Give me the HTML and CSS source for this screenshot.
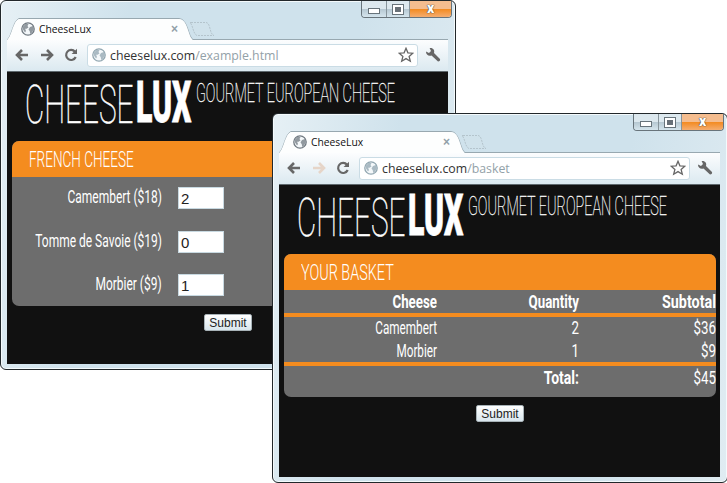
FILE: index.html
```html
<!DOCTYPE html>
<html lang="en">
<head>
<meta charset="utf-8">
<title>CheeseLux</title>
<link rel="stylesheet" href="styles.css">
</head>
<body>
<svg class="defs" width="0" height="0">
  <symbol id="globe" viewBox="0 0 14 14"><circle cx="7" cy="7" r="6.2" fill="#f4f8fa" stroke="currentColor" stroke-width="1.3"/><path d="M2 4.5 4.5 2 7.5 2 6.5 4 7.5 5.5 5 7 4 6.5 5 9 4 10.5 2 7.5zM9 5l3-1 .7 3-1.5 3.5-2 1.5-.5-3-1.2-1.5z" fill="currentColor" opacity=".75"/></symbol>
  <symbol id="back" viewBox="0 0 14 12"><path d="M7 1 2 6l5 5M2 6h11" fill="none" stroke="currentColor" stroke-width="2.6"/></symbol>
  <symbol id="forward" viewBox="0 0 14 12"><path d="M7 1l5 5-5 5M12 6H1" fill="none" stroke="currentColor" stroke-width="2.6"/></symbol>
  <symbol id="reload" viewBox="0 0 14 14"><path d="M11 3.8A5 5 0 1 0 11.7 9" fill="none" stroke="currentColor" stroke-width="2.2"/><path d="M13 .8V6H7.6z" fill="currentColor"/></symbol>
  <symbol id="star" viewBox="0 0 16 16"><path d="m8 1.3 1.9 4.5 4.9.4-3.7 3.2 1.2 4.8L8 11.6l-4.3 2.6 1.2-4.8L1.2 6.2l4.900-.4z" fill="#fff" stroke="#666" stroke-width="1.3"/></symbol>
  <symbol id="wrench" viewBox="0 0 16 16"><path d="M1 4.5 4 6l2-2L4.600 1C8 .4 10 3 9 6l6 6q.6 2-2 2.500L6.500 8.500C3.500 9.500.8 7.500 1 4.500z" fill="#666"/></symbol>
  <symbol id="tab" viewBox="0 0 220 22"><path d="M0 22C5 18 6 3 12 .5H172C181 1 181 19 186 21.500H220" fill="none" stroke="#98a8b0"/><path d="M0 22C5 18 6 3 12 1H172C181 1 181 19 186 22z" fill="#fdfefe"/><path d="M184 4.500H199C204 5 202 16 207 17.500H190C186 16 186 7 183 4.500z" fill="#d0e2eb" stroke="#b4c4cc" stroke-dasharray="2 1"/></symbol>
</svg>
<main class="desktop">
  <section class="window window-form">
    <div class="controls"><i class="min"></i><i class="max"></i><i class="close">x</i></div>
    <header class="tabs">
      <svg class="tab-shape"><use href="#tab"/></svg>
      <div class="tab"><svg class="globe"><use href="#globe"/></svg><span>CheeseLux</span><b>×</b></div>
    </header>
    <nav class="toolbar">
      <svg class="arrow"><use href="#back"/></svg><svg class="arrow"><use href="#forward"/></svg><svg class="reload"><use href="#reload"/></svg>
      <div class="address"><svg class="globe"><use href="#globe"/></svg><span class="url">cheeselux.com<em>/example.html</em></span><svg class="star"><use href="#star"/></svg></div>
      <svg class="wrench"><use href="#wrench"/></svg>
    </nav>
    <div class="page">
      <div class="brand"><span class="word"><span>CHEESE</span></span><strong class="lux"><span>LUX</span></strong><span class="tagline"><span>GOURMET EUROPEAN CHEESE</span></span></div>
      <div class="panel">
        <h2><span class="french">FRENCH CHEESE</span></h2>
        <div class="fields">
          <label><span>Camembert ($18)</span></label><div class="input">2</div>
          <label><span>Tomme de Savoie ($19)</span></label><div class="input">0</div>
          <label><span>Morbier ($9)</span></label><div class="input">1</div>
        </div>
      </div>
      <button>Submit</button>
    </div>
  </section>

  <section class="window window-basket">
    <div class="controls"><i class="min"></i><i class="max"></i><i class="close">x</i></div>
    <header class="tabs">
      <svg class="tab-shape"><use href="#tab"/></svg>
      <div class="tab"><svg class="globe"><use href="#globe"/></svg><span>CheeseLux</span><b>×</b></div>
    </header>
    <nav class="toolbar">
      <svg class="arrow"><use href="#back"/></svg><svg class="arrow disabled"><use href="#forward"/></svg><svg class="reload"><use href="#reload"/></svg>
      <div class="address"><svg class="globe"><use href="#globe"/></svg><span class="url">cheeselux.com<em>/basket</em></span><svg class="star"><use href="#star"/></svg></div>
      <svg class="wrench"><use href="#wrench"/></svg>
    </nav>
    <div class="page">
      <div class="brand"><span class="word"><span>CHEESE</span></span><strong class="lux"><span>LUX</span></strong><span class="tagline"><span>GOURMET EUROPEAN CHEESE</span></span></div>
      <div class="panel">
        <h2><span class="basket">YOUR BASKET</span></h2>
        <div class="row head"><span>Cheese</span><span>Quantity</span><span>Subtotal</span></div>
        <div class="items">
          <div class="row"><span>Camembert</span><span>2</span><span>$36</span></div>
          <div class="row"><span>Morbier</span><span>1</span><span>$9</span></div>
        </div>
        <div class="row total"><span></span><span class="bold">Total:</span><span>$45</span></div>
      </div>
      <button>Submit</button>
    </div>
  </section>
</main>
</body>
</html>
```
FILE: styles.css
```css
* { box-sizing: border-box; }
body { margin: 0; background: #fff; overflow: hidden; }
.defs { position: absolute; }
.desktop { position: relative; width: 727px; height: 483px; overflow: hidden; }
.window {
  position: absolute; width: 456px; height: 370px; padding: 0 7px 6px 6px;
  background: linear-gradient(100deg, #e6f0f5 0, #cfe2ec 25%, #cfe2ec 70%, #e0ecf2);
  border: 1px solid #22282b; border-radius: 6px;
  box-shadow: inset 0 0 0 1px #f4fafc;
  font-family: "Open Sans", sans-serif;
}
.window-form { left: 0; top: 0; }
.window-basket { left: 272px; top: 113px; }

.controls {
  position: absolute; top: 0; right: 3px; width: 91px; height: 17px; display: flex;
  border: 1px solid #68747b; border-top: 0; border-radius: 0 0 4px 4px;
}
.controls i { display: flex; align-items: center; justify-content: center; background: linear-gradient(#dce8ee 50%, #b5c7d1 50%, #d5e5ed); font-style: normal; }
.controls .min { width: 25px; border-right: 1px solid #87949b; border-radius: 0 0 0 3px; }
.min::after { content: ""; width: 10px; height: 4px; margin-top: 4px; background: #fff; border: 1px solid #68747b; }
.max { width: 23px; border-right: 1px solid #87949b; }
.max::after { content: ""; width: 10px; height: 9px; background: #687077; border: 1px solid #68747b; box-shadow: inset 0 0 0 2px #fff; }
.controls .close { flex: 1; border-radius: 0 0 3px 0; background: linear-gradient(#f5bd8f 50%, #f38a1f 50%, #f5ad70); color: #fff; font: 900 14px/14px Roboto, sans-serif; text-shadow: 0 0 1px #333, 0 0 1px #333; padding-bottom: 2px; }

.tabs { position: relative; z-index: 1; display: grid; height: 38px; padding-top: 17px; }
.tab-shape { grid-area: 1 / 1; width: 220px; height: 22px; }
.tab { grid-area: 1 / 1; display: flex; align-items: center; width: 172px; height: 22px; padding-left: 14px; z-index: 1; font-size: 10.3px; color: #111; }
.globe { width: 14px; height: 14px; color: #707980; flex: none; }
.tab span { margin-left: 4px; flex: 1; }
.tab b { color: #91a0a8; font: 700 12px/12px "Liberation Sans", sans-serif; margin-right: 1px; }
.toolbar {
  display: flex; align-items: center; height: 32px; padding: 0 7px 1px 8px;
  border-top: 1px solid #98a8b0; background: linear-gradient(#fcfdfe, #dbe9f0);
  color: #676767;
}
.arrow { width: 14px; height: 12px; margin-right: 11px; }
.arrow.disabled { color: #e6d5c8; }
.reload { width: 14px; height: 14px; margin-left: -1px; }
.address { display: flex; align-items: center; width: 331px; height: 23px; margin-left: 9px; padding: 0 3px 0 4px; background: #fff; border: 1px solid #cadce5; border-radius: 3px; }
.address .globe { color: #91a6b0; }
.url { flex: 1; margin-left: 4px; font-size: 13.4px; line-height: 20px; color: #333; white-space: nowrap; transform: scaleX(.92); transform-origin: 0 50%; }
.url em { font-style: normal; color: #93a1a8; }
.star { width: 16px; height: 16px; }
.wrench { width: 16px; height: 16px; margin-left: 7px; }

.page { height: 293px; padding: 9px 0 0 5px; background: #111; border-top: 1px solid #5e686d; overflow: hidden; color: #fff; font-family: Roboto, sans-serif; }
.brand { display: flex; height: 60px; white-space: nowrap; }
.brand > span > span, .lux > span, h2 span { display: inline-block; transform-origin: 0 50%; }
.word { width: 111px; margin-left: 13px; font-weight: 100; font-size: 54px; line-height: 47px; }
.word span { transform: scaleX(.55); -webkit-text-stroke: .6px #fff; }
.lux { width: 60px; font-weight: 900; font-size: 57px; line-height: 43px; }
.lux span { transform: scaleX(.53); -webkit-text-stroke: .8px #fff; }
.tagline { width: 200px; font-weight: 100; font-size: 25px; line-height: 25px; }
.tagline span { transform: scaleX(.575); -webkit-text-stroke: .3px #fff; }
.panel { width: 432px; background: #6d6d6d; border-radius: 7px; overflow: hidden; }
h2 { margin: 0; height: 36px; padding-left: 17px; background: #f48c1f; font-weight: 300; font-size: 22px; line-height: 38px; white-space: nowrap; }
.french { transform: scaleX(.615); }
.basket { transform: scaleX(.655); }
.fields { display: grid; grid-template-columns: 150px 46px; column-gap: 16px; row-gap: 21.5px; height: 129px; padding-top: 10px; grid-auto-rows: 22px; }
.fields label { display: flex; justify-content: flex-end; font-size: 17.5px; line-height: 21px; white-space: nowrap; }
.fields label span { flex: none; transform: scaleX(.685); transform-origin: 100% 50%; }
.input { background: #fff; border: 1px solid #c8d9e1; padding-left: 2px; color: #222; font: 15px/21px "Liberation Sans", sans-serif; }
button { display: block; width: 48px; height: 17px; margin: 8px 0 0 192px; padding: 0; border: 1px solid #a7b2b7; border-radius: 2px; background: linear-gradient(#fff, #d9e6ed); color: #222; font: 12px/14px "Liberation Sans", sans-serif; }
.row { display: grid; grid-template-columns: 153px 142px 137px; height: 23px; font-size: 17.5px; line-height: 23px; text-align: right; }
.row span { transform: scaleX(.76); transform-origin: 100% 50%; white-space: nowrap; }
.row span:first-child { transform: scaleX(.67); }
.row.head { line-height: 24px; font-weight: 700; }
.row.head span { transform: scaleX(.76); }
.row.head span:last-child { transform: scaleX(.82); }
.items { border: solid #f48c1f; border-width: 4px 0; height: 53px; }
.row.total { height: 31px; line-height: 24px; }
.row .bold { font-weight: 700; transform: scaleX(.8); }
```
